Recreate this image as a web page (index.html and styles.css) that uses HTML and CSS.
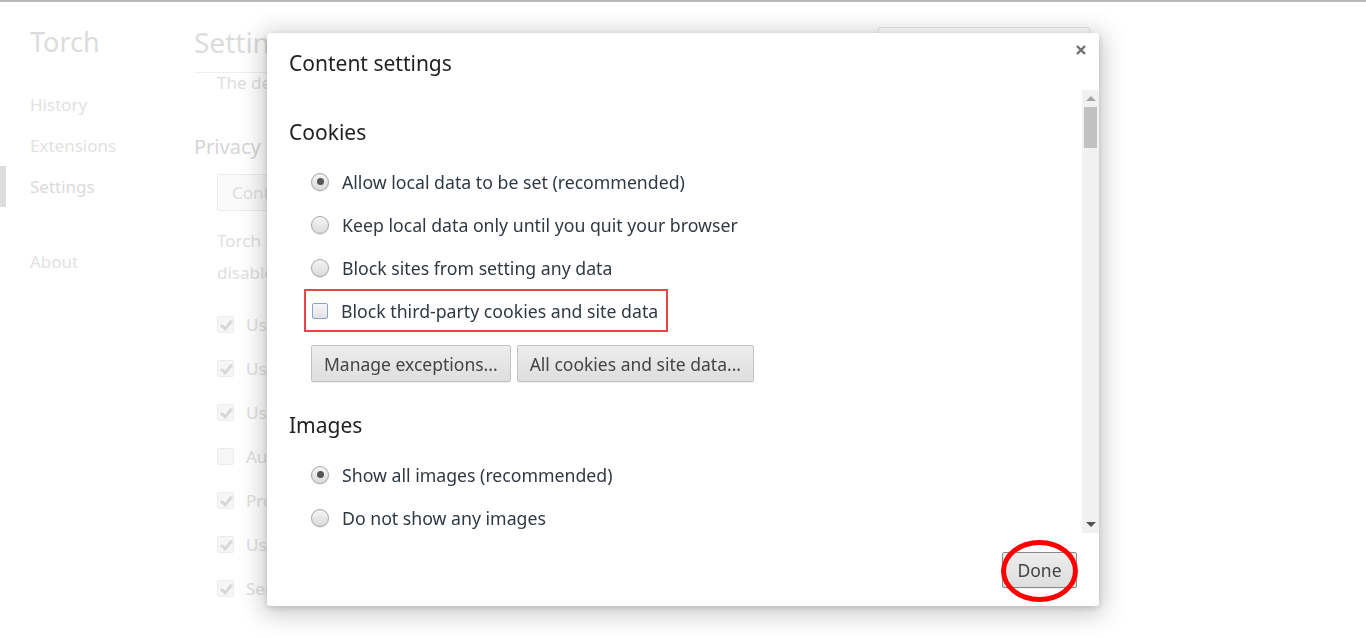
FILE: index.html
```html
<!DOCTYPE html>
<html>
  <head>
    <title>Settings - Content settings</title>
    <meta name="viewport" content="width=device-width, initial-scale=1" />
    <link rel="stylesheet" href="styles.css">
  </head>
  <body>
    <div class="page">
      <nav class="sidebar">
        <h1 class="brand">Torch</h1>
        <ul class="nav">
          <li>History</li>
          <li>Extensions</li>
          <li class="selected">Settings</li>
          <li class="gap">About</li>
        </ul>
      </nav>

      <main class="main">
        <header class="main-header">
          <h1>Settings</h1>
          <div class="search-box">Search settings</div>
        </header>
        <p class="indent">The default settings have been restored.</p>

        <h2 class="section-title">Privacy</h2>
        <div class="indent">
          <button class="ghost-btn" type="button">Content settings...</button>
          <p class="desc">Torch may use web services to improve your browsing experience. You may optionally<br>disable these services. Learn more</p>
          <ul class="bg-checks">
            <li><span class="bg-box checked"></span>Use a web service to help resolve navigation errors</li>
            <li><span class="bg-box checked"></span>Use a prediction service to help complete searches</li>
            <li><span class="bg-box checked"></span>Use a prediction service to load pages more quickly</li>
            <li><span class="bg-box"></span>Automatically send some system information</li>
            <li><span class="bg-box checked"></span>Protect you and your device from dangerous sites</li>
            <li><span class="bg-box checked"></span>Use a web service to help resolve spelling errors</li>
            <li><span class="bg-box checked"></span>Send a "Do Not Track" request with your browsing traffic</li>
          </ul>
        </div>
      </main>
    </div>

    <div class="dialog">
      <div class="dialog-header">
        <h2>Content settings</h2>
        <svg class="close" width="10" height="10" viewBox="0 0 10 10">
          <path d="M1 1 L9 9 M9 1 L1 9" stroke="#6f6f6f" stroke-width="2.4" fill="none"/>
        </svg>
      </div>

      <div class="dialog-body">
        <div class="dialog-content">
          <h3>Cookies</h3>
          <div class="option"><span class="radio on"></span>Allow local data to be set (recommended)</div>
          <div class="option"><span class="radio"></span>Keep local data only until you quit your browser</div>
          <div class="option"><span class="radio"></span>Block sites from setting any data</div>
          <div class="option">
            <span class="highlight"><span class="check"></span>Block third-party cookies and site data</span>
          </div>
          <div class="button-row">
            <button class="btn" type="button">Manage exceptions...</button>
            <button class="btn" type="button">All cookies and site data...</button>
          </div>

          <h3>Images</h3>
          <div class="option"><span class="radio on"></span>Show all images (recommended)</div>
          <div class="option"><span class="radio"></span>Do not show any images</div>
        </div>

        <div class="scrollbar">
          <span class="arrow up"></span>
          <span class="thumb"></span>
          <span class="track"></span>
          <span class="arrow down"></span>
        </div>
      </div>

      <div class="dialog-footer">
        <span class="done-wrap">
          <button class="btn done" type="button">Done</button>
        </span>
      </div>
    </div>
  </body>
</html>
```

FILE: styles.css
```css
html, body {
  height: 100%;
}

body {
  margin: 0;
  border-top: 2px solid #b9b9b9;
  font-family: "Noto Sans", "Open Sans", sans-serif;
  background: #fff;
  overflow: hidden;
}

/* background settings page (faded) */
.page {
  display: flex;
  color: #dedede;
}

.sidebar {
  width: 194px;
  flex-shrink: 0;
}

.brand {
  margin: 20px 0 0 30px;
  font-size: 27px;
  font-weight: normal;
  line-height: 40px;
  color: #dcdcdc;
}

.nav {
  list-style: none;
  margin: 22px 0 0;
  padding: 0;
  font-size: 17px;
}

.nav li {
  height: 41px;
  line-height: 41px;
  padding-left: 30px;
  border-left: 6px solid transparent;
  margin-left: -6px;
  color: #e2e2e2;
}

.nav li.selected {
  margin-left: 0;
  padding-left: 24px;
  border-left-color: #dedede;
  color: #dadada;
}

.nav li.gap {
  margin-top: 34px;
}

.main {
  width: 896px;
}

.main-header {
  display: flex;
  justify-content: space-between;
  align-items: flex-start;
  border-bottom: 1px solid #f0f0f0;
  height: 70px;
}

.main-header h1 {
  margin: 20px 0 0;
  font-size: 28px;
  font-weight: normal;
  line-height: 40px;
  color: #dcdcdc;
}

.search-box {
  margin-top: 25px;
  width: 212px;
  height: 30px;
  box-sizing: border-box;
  border: 1px solid #e6e6e6;
  border-radius: 2px;
  padding-left: 8px;
  font-size: 14px;
  line-height: 28px;
  color: #eee;
}

.indent {
  margin: 0 0 0 23px;
}

p.indent {
  font-size: 17px;
  line-height: 20px;
  margin-top: 0;
}

.section-title {
  margin: 40px 0 0;
  font-size: 20px;
  font-weight: normal;
  line-height: 28px;
  color: #d6d6d6;
}

.ghost-btn {
  margin-top: 13px;
  height: 37px;
  padding: 0 14px;
  font: inherit;
  font-size: 17px;
  color: #e0e0e0;
  background: #fafafa;
  border: 1px solid #ececec;
  border-radius: 2px;
}

.desc {
  margin: 14px 0 0;
  font-size: 17px;
  line-height: 32px;
  color: #e0e0e0;
  white-space: nowrap;
}

.bg-checks {
  list-style: none;
  margin: 13px 0 0;
  padding: 0;
  font-size: 17px;
  color: #e0e0e0;
}

.bg-checks li {
  display: flex;
  align-items: center;
  gap: 12px;
  height: 44px;
  white-space: nowrap;
}

.bg-box {
  width: 15px;
  height: 15px;
  border: 1px solid #ececec;
  border-radius: 2px;
  background: #f6f6f6;
  position: relative;
}

.bg-box.checked::after {
  content: "";
  position: absolute;
  left: 5px;
  top: 1px;
  width: 4px;
  height: 9px;
  border: solid #d8d8d8;
  border-width: 0 3px 3px 0;
  transform: rotate(40deg);
}

/* dialog */
.dialog {
  position: fixed;
  left: 267px;
  top: 33px;
  width: 832px;
  height: 573px;
  background: #fff;
  border-radius: 3px;
  box-shadow: 0 4px 23px 5px rgba(0, 0, 0, 0.2), 0 2px 6px rgba(0, 0, 0, 0.15);
  display: flex;
  flex-direction: column;
  color: #303942;
}

.dialog-header {
  display: flex;
  justify-content: space-between;
  align-items: flex-start;
  height: 57px;
  padding: 0 13px 0 22px;
}

.dialog-header h2 {
  margin: 16px 0 0;
  font-size: 21px;
  font-weight: normal;
  line-height: 28px;
  color: #222;
}

.close {
  margin-top: 12px;
}

.dialog-body {
  display: flex;
  height: 443px;
}

.dialog-content {
  flex: 1;
  overflow: hidden;
  padding-left: 22px;
}

.dialog-content h3 {
  margin: 28px 0 14px;
  font-size: 21px;
  font-weight: normal;
  line-height: 28px;
  color: #222;
}

.option {
  display: flex;
  align-items: center;
  height: 43px;
  padding-left: 22px;
  font-size: 17.7px;
  white-space: nowrap;
}

.radio {
  width: 16px;
  height: 16px;
  margin-right: 13px;
  border: 1px solid #a6a6a6;
  border-radius: 50%;
  background: linear-gradient(#f4f4f4, #dcdcdc);
  box-shadow: 0 1px 1px rgba(0, 0, 0, 0.1);
  display: flex;
  align-items: center;
  justify-content: center;
}

.radio.on::after {
  content: "";
  width: 7px;
  height: 7px;
  border-radius: 50%;
  background: #555;
}

.highlight {
  display: flex;
  align-items: center;
  margin-left: -7px;
  height: 43px;
  box-sizing: border-box;
  padding: 0 8px 0 6px;
  border: 2px solid #e84646;
}

.check {
  width: 14px;
  height: 14px;
  margin-right: 13px;
  border: 1px solid #8ba2c4;
  border-radius: 2px;
  background: linear-gradient(#f6f6f6, #e2e2e2);
}

.button-row {
  display: flex;
  gap: 6px;
  margin: 13px 0 0 22px;
}

.btn {
  height: 37px;
  padding: 0 12px;
  font: inherit;
  font-size: 17.5px;
  color: #444;
  background: linear-gradient(#ededed, #dedede);
  border: 1px solid #c2c2c2;
  border-radius: 2px;
  box-shadow: 0 1px 0 rgba(0, 0, 0, 0.06);
}

.button-row + h3 {
  margin-top: 29px;
}

.scrollbar {
  width: 17px;
  display: flex;
  flex-direction: column;
  align-items: center;
  background: #f1f1f1;
}

.arrow {
  width: 0;
  height: 0;
  margin: 6px 0;
  border-left: 5px solid transparent;
  border-right: 5px solid transparent;
}

.arrow.up {
  border-bottom: 5px solid #a3a3a3;
}

.arrow.down {
  border-top: 5px solid #505050;
}

.thumb {
  width: 13px;
  height: 41px;
  background: #c1c1c1;
}

.track {
  flex: 1;
}

.dialog-footer {
  display: flex;
  justify-content: flex-end;
  padding: 19px 22px 0 0;
}

.done-wrap {
  position: relative;
}

.btn.done {
  height: 36px;
  width: 75px;
  padding: 0;
  border-color: #8a8a8a;
  font-size: 17.5px;
}

.done-wrap::after {
  content: "";
  position: absolute;
  left: -1px;
  top: -12px;
  width: 77px;
  height: 62px;
  box-sizing: border-box;
  border: 5px solid #f00;
  border-radius: 50%;
  pointer-events: none;
}
```
